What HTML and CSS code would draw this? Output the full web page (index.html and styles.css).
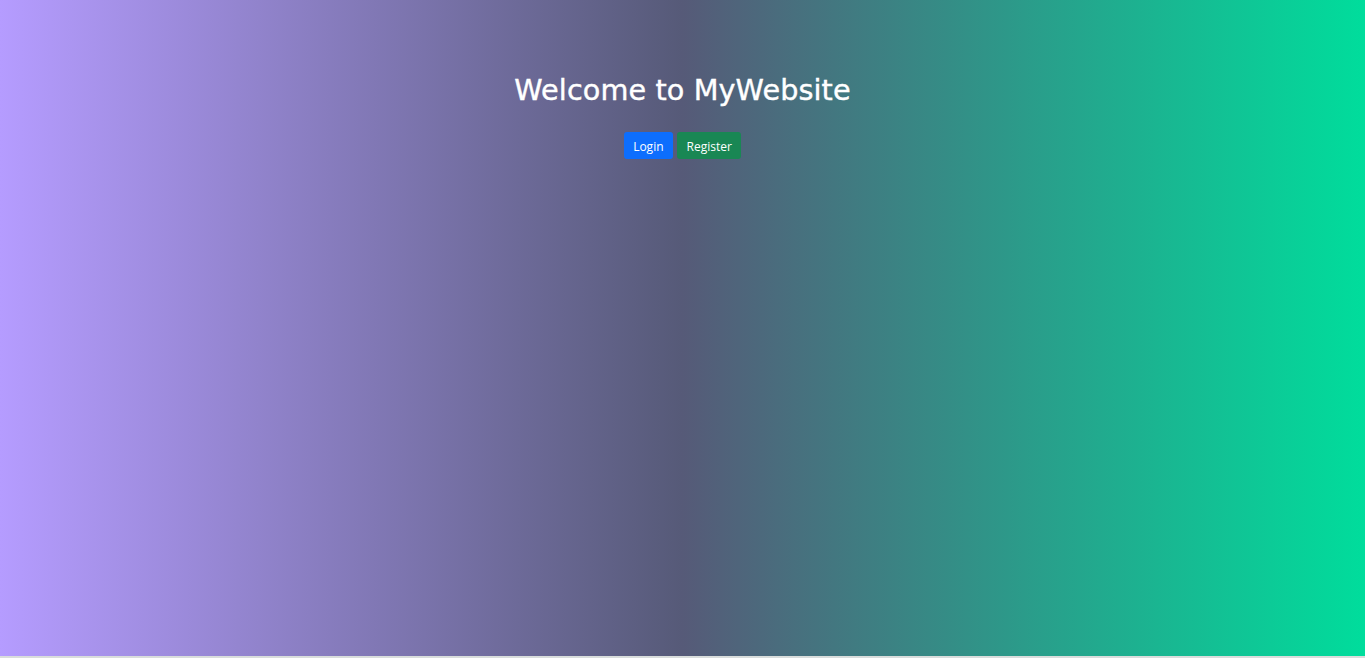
FILE: index.html
```html
<!DOCTYPE html>
<html lang="en">
<head>
<meta charset="utf-8">
<title>MyWebsite</title>
<link rel="stylesheet" href="styles.css">
</head>
<body>
<div class="page">
  <div class="hero">
    <h1 class="title">Welcome to MyWebsite</h1>
    <div class="actions">
      <a class="btn btn-login" href="#">Login</a>
      <a class="btn btn-register" href="#">Register</a>
    </div>
  </div>
</div>
</body>
</html>
```
FILE: styles.css
```css
html, body {
  margin: 0;
  padding: 0;
}
body {
  background: #d9dddc;
  height: 658px;
  overflow: hidden;
}
.page {
  height: 656px;
  background: linear-gradient(to right, #b59cff 0%, #565a78 50%, #00dd9c 100%);
}
.hero {
  display: flex;
  flex-direction: column;
  align-items: center;
  padding-top: 70px;
}
.title {
  margin: 0;
  color: #fff;
  font-family: "Comic Sans MS", "DejaVu Sans", sans-serif;
  font-weight: 500;
  font-size: 28.7px;
  line-height: 40px;
  letter-spacing: 0.1px;
  -webkit-text-stroke: 0.4px #fff;
}
.actions {
  display: flex;
  gap: 4px;
  margin-top: 22px;
}
.btn {
  display: block;
  color: #fff;
  text-decoration: none;
  font-family: "Open Sans", "Noto Sans", sans-serif;
  font-size: 12px;
  line-height: 19px;
  padding: 5px 9.5px 3px;
  border-radius: 3px;
}
.btn-login {
  background: #0d6efd;
}
.btn-register {
  background: #198754;
}
```
